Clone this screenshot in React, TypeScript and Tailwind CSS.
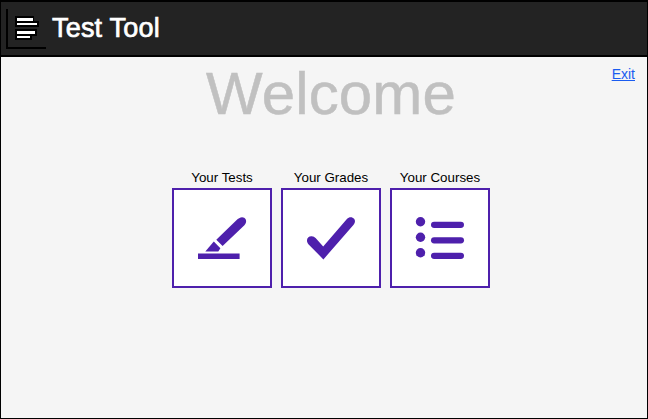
import type { ReactNode } from "react";

function Logo() {
  return (
    <svg width="40" height="40" viewBox="0 0 40 40" shapeRendering="crispEdges" aria-hidden="true">
      <path d="M0 0h2v38h38v2H0z" fill="#000" />
      <path d="M9 7h19v5h5v6H9zM9 20h22v7h-5v4H9z" fill="#000" />
      <path d="M11 9h16v3H11zM11 14h20v2H11zM11 22h18v3H11zM11 27h13v2H11z" fill="#fff" />
    </svg>
  );
}

function PenIcon() {
  return (
    <svg width="96" height="96" viewBox="0 0 96 96" fill="#4e20ac" aria-hidden="true">
      <path d="M24 63.4h41.6v5.7H24z" />
      <path d="M42.3 49.7 62.4 30.2C64.8 28 67.6 26.2 70.2 27.8C72.8 29.4 72.7 32.9 70.4 35.2L48.6 56z" />
      <path d="M39.8 51.6 46.4 58.2 44.3 61.5H31.3z" />
    </svg>
  );
}

function CheckIcon() {
  return (
    <svg width="96" height="96" viewBox="0 0 96 96" fill="#4e20ac" aria-hidden="true">
      <path d="M40.4 69.4 25.4 54.2C22.5 50.6 24.3 46.4 28.4 46.3C30.4 46.2 31.6 47.1 32.6 48.1L40.2 56.4L63.9 29C66.2 26.4 69.5 26.8 71.1 28.8C72.5 30.6 72.2 32.8 70.6 34.8z" />
    </svg>
  );
}

function ListIcon() {
  return (
    <svg width="96" height="96" viewBox="0 0 96 96" fill="#4e20ac" aria-hidden="true">
      <circle cx="28.5" cy="31.8" r="4.7" />
      <circle cx="28.5" cy="47.3" r="4.7" />
      <circle cx="28.5" cy="62.8" r="4.7" />
      <rect x="39" y="31.7" width="33" height="6.3" rx="3.15" />
      <rect x="39" y="47.2" width="33" height="6.3" rx="3.15" />
      <rect x="39" y="62.7" width="33" height="6.3" rx="3.15" />
    </svg>
  );
}

function Tile({ label, children }: { label: string; children: ReactNode }) {
  return (
    <div className="flex w-[100px] flex-col items-center">
      <span className="h-5 whitespace-nowrap text-[13.33px] leading-5 text-black">{label}</span>
      <button className="size-[100px] border-2 border-[#4e20ac] bg-white">{children}</button>
    </div>
  );
}

export default function App() {
  return (
    <div className="flex h-[419px] w-[648px] flex-col border border-black bg-[#f5f5f5] font-['Liberation_Sans',Arial,sans-serif]">
      <header className="flex h-14 shrink-0 border-t border-b-2 border-black bg-[#232323] pl-[5px] pt-[7px]">
        <Logo />
        <span className="ml-[6px] mt-[4px] text-[27px] leading-[31px] tracking-[0.2px] text-white [-webkit-text-stroke:0.7px_white]">
          Test Tool
        </span>
      </header>
      <main className="flex flex-col">
        <div className="grid h-[111px] grid-cols-[1fr_auto_1fr] items-start">
          <h1 className="col-start-2 ml-[14px] mt-px text-[60px] leading-[72px] tracking-[0.15px] text-[#c0c0c0] [-webkit-text-stroke:0.5px_#c0c0c0]">
            Welcome
          </h1>
          <a href="#" className="mr-3 mt-2 justify-self-end text-sm leading-[18px] text-[#1a5cf0] underline">
            Exit
          </a>
        </div>
        <div className="ml-[171px] flex gap-[9px]">
          <Tile label="Your Tests"><PenIcon /></Tile>
          <Tile label="Your Grades"><CheckIcon /></Tile>
          <Tile label="Your Courses"><ListIcon /></Tile>
        </div>
      </main>
    </div>
  );
}
